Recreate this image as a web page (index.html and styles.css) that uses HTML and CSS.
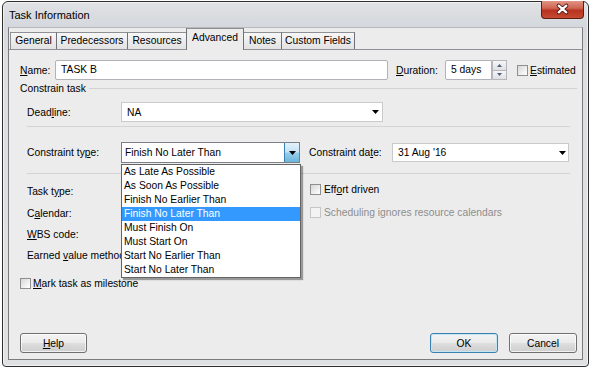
FILE: index.html
```html
<!DOCTYPE html>
<html>
<head>
<meta charset="utf-8">
<title>Task Information</title>
<link rel="stylesheet" href="styles.css">
</head>
<body>
<div class="window">
  <div class="titlebar">
    <span class="title">Task Information</span>
    <div class="close">
      <svg width="43" height="18" viewBox="0 0 43 18">
        <path d="M17.5 5.5 L25.5 12.5 M25.5 5.5 L17.5 12.5" stroke="#4a1410" stroke-width="4.2" stroke-linecap="round" fill="none"/>
        <path d="M17.5 5.5 L25.5 12.5 M25.5 5.5 L17.5 12.5" stroke="#ffffff" stroke-width="2.4" stroke-linecap="round" fill="none"/>
      </svg>
    </div>
  </div>
  <div class="client">
    <div class="tabs">
      <div class="tab first w-general">General</div>
      <div class="tab w-pred">Predecessors</div>
      <div class="tab w-res">Resources</div>
      <div class="tab active w-adv">Advanced</div>
      <div class="tab w-notes">Notes</div>
      <div class="tab w-custom">Custom Fields</div>
    </div>
    <div class="panel">
      <div class="row name-row">
        <span class="lbl-name"><u>N</u>ame:</span>
        <div class="textbox name-box">TASK B</div>
        <span class="lbl-dur"><u>D</u>uration:</span>
        <div class="textbox dur-box">5 days</div>
        <div class="spin">
          <div class="spin-half"><svg width="5" height="3"><path d="M0 3h5L2.5 0z" fill="#4e5f80"/></svg></div>
          <div class="spin-half"><svg width="5" height="3"><path d="M0 0h5L2.5 3z" fill="#4e5f80"/></svg></div>
        </div>
        <span class="chk chk-est"></span>
        <span class="chk-lbl"><u>E</u>stimated</span>
      </div>

      <div class="group-head">
        <span>Constrain task</span>
        <i class="rule"></i>
      </div>

      <div class="row deadline-row">
        <span class="lbl-ind">Dead<u>l</u>ine:</span>
        <div class="combo combo-deadline">
          <span class="combo-text">NA</span>
          <span class="arrow-box"><svg width="7" height="4"><path d="M0 0h7L3.5 4z" fill="#000"/></svg></span>
        </div>
      </div>

      <div class="sep"></div>

      <div class="row constraint-row">
        <span class="lbl-ind">Constraint ty<u>p</u>e:</span>
        <div class="combo combo-constraint">
          <span class="combo-text">Finish No Later Than</span>
          <span class="combo-btn"><svg width="7" height="4"><path d="M0 0h7L3.5 4z" fill="#000"/></svg></span>
          <ul class="dd-list">
            <li>As Late As Possible</li>
            <li>As Soon As Possible</li>
            <li>Finish No Earlier Than</li>
            <li class="sel">Finish No Later Than</li>
            <li>Must Finish On</li>
            <li>Must Start On</li>
            <li>Start No Earlier Than</li>
            <li>Start No Later Than</li>
          </ul>
        </div>
        <span class="lbl-date">Constraint da<u>t</u>e:</span>
        <div class="combo combo-date">
          <span class="combo-text">31 Aug '16</span>
          <span class="arrow-box date-arrow"><svg width="7" height="4"><path d="M0 0h7L3.5 4z" fill="#000"/></svg></span>
        </div>
      </div>

      <div class="sep sep2"></div>

      <div class="lower">
        <div class="col-left">
          <div class="lrow h22"><span>Task t<u>y</u>pe:</span></div>
          <div class="lrow h22"><span>C<u>a</u>lendar:</span></div>
          <div class="lrow h21"><span><u>W</u>BS code:</span></div>
          <div class="lrow h20"><span>Earned <u>v</u>alue method:</span></div>
        </div>
        <div class="col-right">
          <div class="rrow"><span class="chk"></span><span class="chk-lbl">Eff<u>o</u>rt driven</span></div>
          <div class="rrow disabled"><span class="chk chk-dis"></span><span class="chk-lbl">Scheduling ignores resource calendars</span></div>
        </div>
      </div>

      <div class="row milestone">
        <span class="chk"></span><span class="chk-lbl"><u>M</u>ark task as milestone</span>
      </div>
    </div>
    <div class="buttons">
      <div class="btn btn-help"><span><u>H</u>elp</span></div>
      <div class="btn btn-ok">OK</div>
      <div class="btn btn-cancel">Cancel</div>
    </div>
  </div>
</div>
</body>
</html>
```

FILE: styles.css
```css
html, body {
  margin: 0;
  padding: 0;
  background: #ffffff;
}
body {
  font-family: "Liberation Sans", Arial, sans-serif;
  font-size: 10.3px;
  color: #000;
}
u { text-decoration: underline; text-underline-offset: 1px; }

.window {
  margin: 1px 0 0 2px;
  width: 587px;
  height: 366px;
  box-sizing: border-box;
  border: 1px solid #2f2f2f;
  border-radius: 6px 6px 4px 4px;
  background: linear-gradient(180deg, #e0e2e5 0px, #d5d8dc 24px, #dcdee1 60px, #e0e1e3 100%);
  box-shadow: inset 0 0 0 1px rgba(255,255,255,0.55);
  display: flex;
  flex-direction: column;
}

.titlebar {
  flex: none;
  height: 25px;
  display: flex;
  align-items: flex-start;
}
.title {
  font-size: 11px;
  line-height: 13px;
  margin: 7px 0 0 6px;
  color: #000;
}
.close {
  margin: -1px 4px 0 auto;
  width: 43px;
  height: 18px;
  box-sizing: border-box;
  border: 1px solid #5e1d15;
  border-top: none;
  border-radius: 0 0 4px 4px;
  background: linear-gradient(180deg, #e19484 0%, #cf6552 42%, #b8321f 55%, #c44a30 100%);
  display: flex;
  align-items: center;
  justify-content: center;
  overflow: hidden;
}
.close svg { display: block; margin-top: -1px; }

.client {
  flex: 1;
  margin: 0 5px 6px;
  border: 1px solid #7b7b7b;
  border-top-color: #b8b8b8;
  background: #ececec;
  display: flex;
  flex-direction: column;
}

.tabs {
  flex: none;
  height: 21px;
  display: flex;
  align-items: flex-end;
  padding-left: 1px;
}
.tab {
  height: 17px;
  box-sizing: border-box;
  border-top: 1px solid #8e9096;
  border-right: 1px solid #6f7178;
  background: linear-gradient(180deg, #f7f7f7 0%, #ececec 50%, #e2e2e2 100%);
  text-align: center;
  line-height: 16px;
  white-space: nowrap;
}
.tab.first { border-left: 1px solid #8e9096; }
.tab.active {
  height: 22px;
  margin-bottom: -1px;
  margin-left: -1px;
  border-left: 1px solid #6f7178;
  background: #ececec;
  line-height: 18px;
  position: relative;
  z-index: 1;
}
.w-general { width: 47px; }
.w-pred { width: 71px; }
.w-res { width: 59px; }
.w-adv { width: 58px; }
.w-notes { width: 38px; }
.w-custom { width: 73px; }

.panel {
  flex: none;
  height: 273px;
  box-sizing: border-box;
  border-top: 1px solid #8e9096;
  padding: 10px 0 0 11px;
}

.row {
  display: flex;
  align-items: center;
}

.name-row { height: 20px; }
.lbl-name { width: 35px; }
.textbox {
  box-sizing: border-box;
  height: 20px;
  border: 1px solid #b1b3b8;
  border-radius: 2px;
  background: #fff;
  padding-left: 5px;
  line-height: 18px;
}
.name-box { width: 333px; }
.lbl-dur { margin-left: 8px; width: 49px; }
.dur-box { width: 47px; border-radius: 2px 0 0 2px; }
.spin {
  width: 15px;
  height: 20px;
  display: flex;
  flex-direction: column;
}
.spin-half {
  flex: 1;
  box-sizing: border-box;
  border: 1px solid #b4b6bb;
  background: linear-gradient(180deg, #f6f6f6, #dfe0e2);
  display: flex;
  align-items: center;
  justify-content: center;
}
.spin-half + .spin-half { border-top: none; }
.spin-half svg { display: block; }

.chk {
  display: inline-block;
  flex: none;
  width: 11px;
  height: 11px;
  box-sizing: border-box;
  border: 1px solid #8e8f8f;
  background: linear-gradient(135deg, #d6d6d6 0%, #f4f4f4 70%, #ffffff 100%);
}
.chk-est { margin-left: 10px; }
.chk-lbl { margin-left: 2px; white-space: nowrap; }

.group-head {
  display: flex;
  align-items: center;
  height: 14px;
  margin-top: 1px;
}
.rule {
  flex: 1;
  height: 0;
  border-top: 1px solid #d3d3d3;
  margin: 0 5px 0 3px;
}

.deadline-row {
  margin: 7px 0 0 7px;
  height: 20px;
}
.lbl-ind { width: 94px; flex: none; white-space: nowrap; }
.combo {
  box-sizing: border-box;
  display: flex;
  align-items: center;
  background: #fff;
  border: 1px solid #c9cacd;
}
.combo-text {
  flex: 1;
  padding-left: 5px;
  white-space: nowrap;
}
.arrow-box {
  width: 14px;
  display: flex;
  justify-content: center;
}
.arrow-box svg { display: block; }
.combo-deadline { width: 262px; height: 20px; }

.sep {
  margin: 4px 0 0 7px;
  width: 543px;
  height: 0;
  border-top: 1px solid #d3d3d3;
}
.sep2 { margin-top: 10px; }

.constraint-row {
  margin: 15px 0 0 7px;
  height: 21px;
}
.combo-constraint {
  width: 179px;
  height: 21px;
  position: relative;
  border-color: #7c7f86;
}
.combo-constraint .combo-text { padding-left: 3px; }
.combo-btn {
  width: 15px;
  height: 100%;
  box-sizing: border-box;
  border-left: 1px solid #3c7fb1;
  background: linear-gradient(180deg, #e3f2fb 0%, #c2e3f6 48%, #96cdeb 52%, #6cb5dd 100%);
  display: flex;
  align-items: center;
  justify-content: center;
}
.combo-btn svg { display: block; }
.lbl-date { margin-left: 9px; width: 83px; flex: none; white-space: nowrap; }
.combo-date { width: 177px; height: 19px; }
.date-arrow { width: 12px; }

.dd-list {
  position: absolute;
  left: -1px;
  top: 21px;
  width: 180px;
  box-sizing: border-box;
  margin: 0;
  padding: 0;
  list-style: none;
  background: #fff;
  border: 1px solid #646464;
  box-shadow: 2px 2px 1px rgba(0,0,0,0.35);
  z-index: 5;
}
.dd-list li {
  height: 14px;
  line-height: 14px;
  padding-left: 2px;
  white-space: nowrap;
}
.dd-list li.sel {
  background: #3399ff;
  color: #fff;
}

.lower {
  display: flex;
  margin-left: 7px;
}
.col-left {
  width: 283px;
  margin-top: 6px;
  display: flex;
  flex-direction: column;
}
.lrow {
  display: flex;
  align-items: center;
  white-space: nowrap;
}
.h22 { height: 22px; }
.h21 { height: 21px; }
.h20 { height: 20px; }
.col-right {
  margin-top: 8px;
  display: flex;
  flex-direction: column;
  gap: 9px;
}
.rrow {
  height: 14px;
  display: flex;
  align-items: center;
}
.rrow .chk-lbl { margin-left: 3px; }
.disabled { color: #8d8d8d; }
.chk-dis {
  border-color: #c6c6c6;
  background: #f3f3f3;
}

.milestone {
  margin-top: 11px;
  height: 14px;
}

.buttons {
  flex: none;
  margin-top: 11px;
  display: flex;
  padding: 0 5px 0 11px;
}
.btn {
  height: 20px;
  box-sizing: border-box;
  border: 1px solid #707070;
  border-radius: 3px;
  background: linear-gradient(180deg, #f3f3f3 0%, #ebebeb 48%, #dddddd 52%, #cfcfcf 100%);
  box-shadow: inset 0 0 0 1px rgba(255,255,255,0.7);
  display: flex;
  align-items: center;
  justify-content: center;
}
.btn-help { width: 67px; }
.btn-ok {
  width: 68px;
  margin-left: auto;
  border-color: #3c7fb1;
  box-shadow: inset 0 0 0 1px #c4e5f6;
}
.btn-cancel { width: 68px; margin-left: 11px; }
```
